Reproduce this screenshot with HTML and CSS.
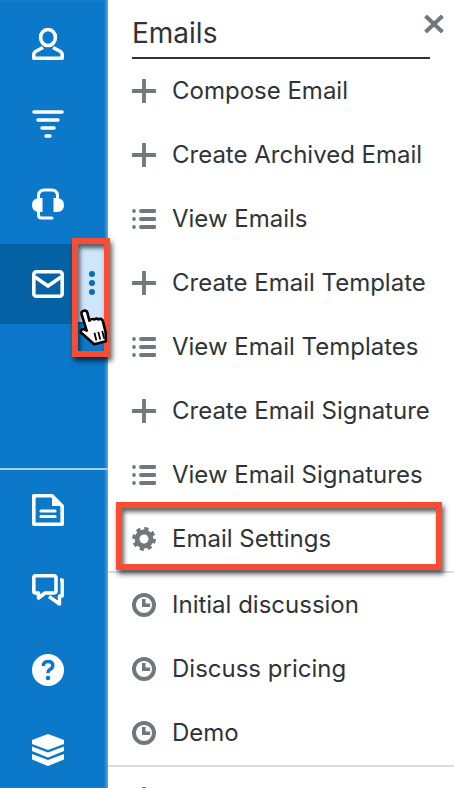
FILE: index.html
```html
<!DOCTYPE html>
<html lang="en">
<head>
    <meta charset="UTF-8">
    <meta name="viewport" content="width=device-width, initial-scale=1.0">
    <title>Emails menu</title>
    <link rel="stylesheet" href="styles.css">
</head>

<body>
    <div class="app">
        <nav class="sidebar">
            <div class="nav-group">
                <div class="nav-item">
                    <svg class="nav-icon" viewBox="0 0 32 32"><ellipse cx="16" cy="9.5" rx="7.4" ry="8" fill="none" stroke="#fff" stroke-width="3.6"/><path d="M11 19.5 L3.5 23.5 Q1.8 24.5 1.8 26.5 V30.2 H30.2 V26.5 Q30.2 24.5 28.5 23.5 L21 19.5" fill="none" stroke="#fff" stroke-width="3.6" stroke-linejoin="round"/></svg>
                </div>
                <div class="nav-item">
                    <svg class="nav-icon" viewBox="0 0 32 32"><g stroke="#fff" stroke-width="3.6" stroke-linecap="round"><path d="M2 4 H30"/><path d="M6 12 H26"/><path d="M10 20 H22"/><path d="M14 28 H18"/></g></svg>
                </div>
                <div class="nav-item">
                    <svg class="nav-icon" viewBox="0 0 32 32"><path d="M6.5 11 V8 Q6.5 2 12.5 2 H19.5 Q25.5 2 25.5 8 V11" fill="none" stroke="#fff" stroke-width="3"/><path d="M10.5 10 H7 Q0 10.5 0 17 Q0 23.5 7 24 H10.5 Z" fill="#fff"/><path d="M21.5 10 H25 Q32 10.5 32 17 Q32 23.5 25 24 H21.5 Z" fill="#fff"/><path d="M6.5 23 V27 Q6.5 30 9.5 30 H20" fill="none" stroke="#fff" stroke-width="3" stroke-linecap="round"/></svg>
                </div>
                <div class="nav-item active">
                    <svg class="nav-icon" viewBox="0 0 32 32"><rect x="1.8" y="3.8" width="28.4" height="24.4" rx="2.5" fill="none" stroke="#fff" stroke-width="3.6"/><path d="M3 9 L16 18 L29 9" fill="none" stroke="#fff" stroke-width="3.6"/></svg>
                    <div class="kebab"><span></span><span></span><span></span></div>
                    <div class="callout callout-kebab"></div>
                    <svg class="hand" viewBox="0 0 30 40"><path d="M7 5 Q7 2 10 2 Q13 2 13 5 V13 Q16 11 18 13 Q21 12 22 14 Q25 13 26 16 V28 L24 37 H12 L3 24 Q1 21 3 20 Q5 19 8 22 Z" fill="#fff" stroke="#000" stroke-width="2.6" stroke-linejoin="round"/><path d="M15 26 V34 M19 26 V34 M23 26 V34" stroke="#000" stroke-width="1.8"/></svg>
                </div>
            </div>
            <div class="nav-divider"></div>
            <div class="nav-group">
                <div class="nav-item">
                    <svg class="nav-icon" viewBox="0 0 32 32"><path d="M1.8 1.8 H20 L30.2 12 V30.2 H1.8 Z" fill="none" stroke="#fff" stroke-width="3.6" stroke-linejoin="round"/><path d="M20 2 L30 12 H20 Z" fill="#fff"/><path d="M9 17 H23 M9 22.5 H23" stroke="#fff" stroke-width="3.2" stroke-linecap="round"/></svg>
                </div>
                <div class="nav-item">
                    <svg class="nav-icon" viewBox="0 0 32 32"><path d="M3.5 1.8 H21.5 Q24 1.8 24 4 V17 Q24 19 21.5 19 H13 L6.5 24 V19 H3.5 Q1.8 19 1.8 17 V4 Q1.8 1.8 3.5 1.8 Z" fill="none" stroke="#fff" stroke-width="3.6" stroke-linejoin="round"/><path d="M28 6 H30.2 V22 H27.5 V30 L17 22.5" fill="none" stroke="#fff" stroke-width="3.4" stroke-linejoin="round"/></svg>
                </div>
                <div class="nav-item">
                    <svg class="nav-icon" viewBox="0 0 32 32"><circle cx="16" cy="16" r="16" fill="#fff"/><path d="M11.2 12 Q11.5 7.5 16 7.5 Q20.8 7.5 20.8 11.5 Q20.8 14 18 15.5 Q16 16.5 16 19" fill="none" stroke="#0b78c9" stroke-width="3.4"/><circle cx="16" cy="24" r="2.3" fill="#0b78c9"/></svg>
                </div>
                <div class="nav-item">
                    <svg class="nav-icon" viewBox="0 0 32 32"><path d="M16 0 L32 6 V10 L16 16 L0 10 V6 Z" fill="#fff"/><path d="M0 12.5 V17 L16 23.5 L32 17 V12.5 L16 18.5 Z" fill="#fff"/><path d="M0 20 V25.5 L16 32 L32 25.5 V20 L16 26 Z" fill="#fff"/></svg>
                </div>
            </div>
        </nav>

        <main class="panel">
            <div class="panel-head">
                <h2>Emails</h2>
                <svg class="close" viewBox="0 0 22 20"><path d="M2.5 2 L19.5 18 M19.5 2 L2.5 18" stroke="#6f787d" stroke-width="4"/></svg>
            </div>

            <ul class="menu">
                <li><svg class="item-icon" viewBox="0 0 24 24"><path d="M12 1 V23 M1 12 H23" stroke="#6f787d" stroke-width="3.8" stroke-linecap="round"/></svg>Compose Email</li>
                <li><svg class="item-icon" viewBox="0 0 24 24"><path d="M12 1 V23 M1 12 H23" stroke="#6f787d" stroke-width="3.8" stroke-linecap="round"/></svg>Create Archived Email</li>
                <li><svg class="item-icon" viewBox="0 0 24 24"><path d="M9 4 H22.5 M9 12 H22.5 M9 20 H22.5" stroke="#6f787d" stroke-width="3.8" stroke-linecap="round"/><circle cx="2" cy="4" r="1.9" fill="#6f787d"/><circle cx="2" cy="12" r="1.9" fill="#6f787d"/><circle cx="2" cy="20" r="1.9" fill="#6f787d"/></svg>View Emails</li>
                <li><svg class="item-icon" viewBox="0 0 24 24"><path d="M12 1 V23 M1 12 H23" stroke="#6f787d" stroke-width="3.8" stroke-linecap="round"/></svg>Create Email Template</li>
                <li><svg class="item-icon" viewBox="0 0 24 24"><path d="M9 4 H22.5 M9 12 H22.5 M9 20 H22.5" stroke="#6f787d" stroke-width="3.8" stroke-linecap="round"/><circle cx="2" cy="4" r="1.9" fill="#6f787d"/><circle cx="2" cy="12" r="1.9" fill="#6f787d"/><circle cx="2" cy="20" r="1.9" fill="#6f787d"/></svg>View Email Templates</li>
                <li><svg class="item-icon" viewBox="0 0 24 24"><path d="M12 1 V23 M1 12 H23" stroke="#6f787d" stroke-width="3.8" stroke-linecap="round"/></svg>Create Email Signature</li>
                <li><svg class="item-icon" viewBox="0 0 24 24"><path d="M9 4 H22.5 M9 12 H22.5 M9 20 H22.5" stroke="#6f787d" stroke-width="3.8" stroke-linecap="round"/><circle cx="2" cy="4" r="1.9" fill="#6f787d"/><circle cx="2" cy="12" r="1.9" fill="#6f787d"/><circle cx="2" cy="20" r="1.9" fill="#6f787d"/></svg>View Email Signatures</li>
                <li class="settings">
                    <svg class="item-icon" viewBox="0 0 24 24"><circle cx="12" cy="12" r="7" fill="none" stroke="#6f787d" stroke-width="5"/><circle cx="12" cy="12" r="10.2" fill="none" stroke="#6f787d" stroke-width="3.4" stroke-dasharray="4.2 3.8"/></svg>Email Settings
                    <div class="callout callout-settings"></div>
                </li>
            </ul>

            <ul class="menu">
                <li><svg class="item-icon" viewBox="0 0 24 24"><circle cx="12" cy="12" r="10" fill="none" stroke="#6f787d" stroke-width="4"/><path d="M10 6 H13.5 V10.5 H18 V14 H10 Z" fill="#6f787d"/></svg>Initial discussion</li>
                <li><svg class="item-icon" viewBox="0 0 24 24"><circle cx="12" cy="12" r="10" fill="none" stroke="#6f787d" stroke-width="4"/><path d="M10 6 H13.5 V10.5 H18 V14 H10 Z" fill="#6f787d"/></svg>Discuss pricing</li>
                <li><svg class="item-icon" viewBox="0 0 24 24"><circle cx="12" cy="12" r="10" fill="none" stroke="#6f787d" stroke-width="4"/><path d="M10 6 H13.5 V10.5 H18 V14 H10 Z" fill="#6f787d"/></svg>Demo</li>
            </ul>

            <ul class="menu">
                <li><svg class="item-icon" viewBox="0 0 24 24"><path d="M12 1 V23 M1 12 H23" stroke="#6f787d" stroke-width="3.8" stroke-linecap="round"/></svg></li>
            </ul>
        </main>
    </div>
</body>
</html>
```

FILE: styles.css
```css
html, body {
    margin: 0;
    padding: 0;
    background: #fff;
}
.app {
    display: flex;
    width: 454px;
    height: 788px;
    overflow: hidden;
    font-family: Inter, "Liberation Sans", sans-serif;
    color: #2f3437;
}
.sidebar {
    flex: 0 0 108px;
    height: 788px;
    padding-top: 4px;
    box-sizing: border-box;
    background: #0b78c9;
    box-shadow: inset -3px 0 3px -1px rgba(255, 255, 255, 0.35);
}
.nav-item {
    position: relative;
    display: flex;
    align-items: center;
    height: 80px;
    padding-left: 32px;
}
.nav-item.active {
    background: #0563a5;
}
.nav-icon {
    width: 32px;
    height: 32px;
}
.nav-divider {
    height: 2px;
    margin-top: 144px;
    background: #a5cdee;
}
.kebab {
    position: absolute;
    left: 78px;
    top: 0;
    width: 28px;
    height: 78px;
    display: flex;
    flex-direction: column;
    align-items: center;
    justify-content: center;
    gap: 3px;
    background: #cfe5fb;
}
.kebab span {
    width: 6px;
    height: 6px;
    border-radius: 50%;
    background: #0b6cb6;
}
.callout {
    position: absolute;
    box-sizing: border-box;
    border: 6px solid #f94c35;
    box-shadow: 2px 4px 5px rgba(0, 0, 0, 0.65), inset 2px 4px 4px rgba(0, 0, 0, 0.6);
}
.callout-kebab {
    left: 72px;
    top: -6px;
    width: 38px;
    height: 119px;
}
.hand {
    position: absolute;
    left: 78px;
    top: 63px;
    width: 30px;
    height: 40px;
    transform: rotate(-14deg);
}
.panel {
    flex: 1;
    min-width: 0;
}
.panel-head {
    position: relative;
    height: 57px;
    margin: 0 24px;
    border-bottom: 2px solid #2f3437;
}
.panel-head h2 {
    margin: 0;
    padding-top: 17px;
    font-size: 28px;
    line-height: 32px;
    font-weight: 400;
}
.close {
    position: absolute;
    left: 291px;
    top: 14px;
    width: 22px;
    height: 20px;
}
.menu {
    list-style: none;
    margin: 0;
    padding: 0;
    border-bottom: 2px solid #d9dcde;
}
.menu li {
    position: relative;
    display: flex;
    align-items: center;
    height: 62px;
    padding: 0 0 2px 24px;
    font-size: 24px;
}
.item-icon {
    flex: 0 0 24px;
    width: 24px;
    height: 24px;
    margin: 2px 16px 0 0;
}
.callout-settings {
    left: 8px;
    top: -5px;
    width: 326px;
    height: 68px;
}
```
